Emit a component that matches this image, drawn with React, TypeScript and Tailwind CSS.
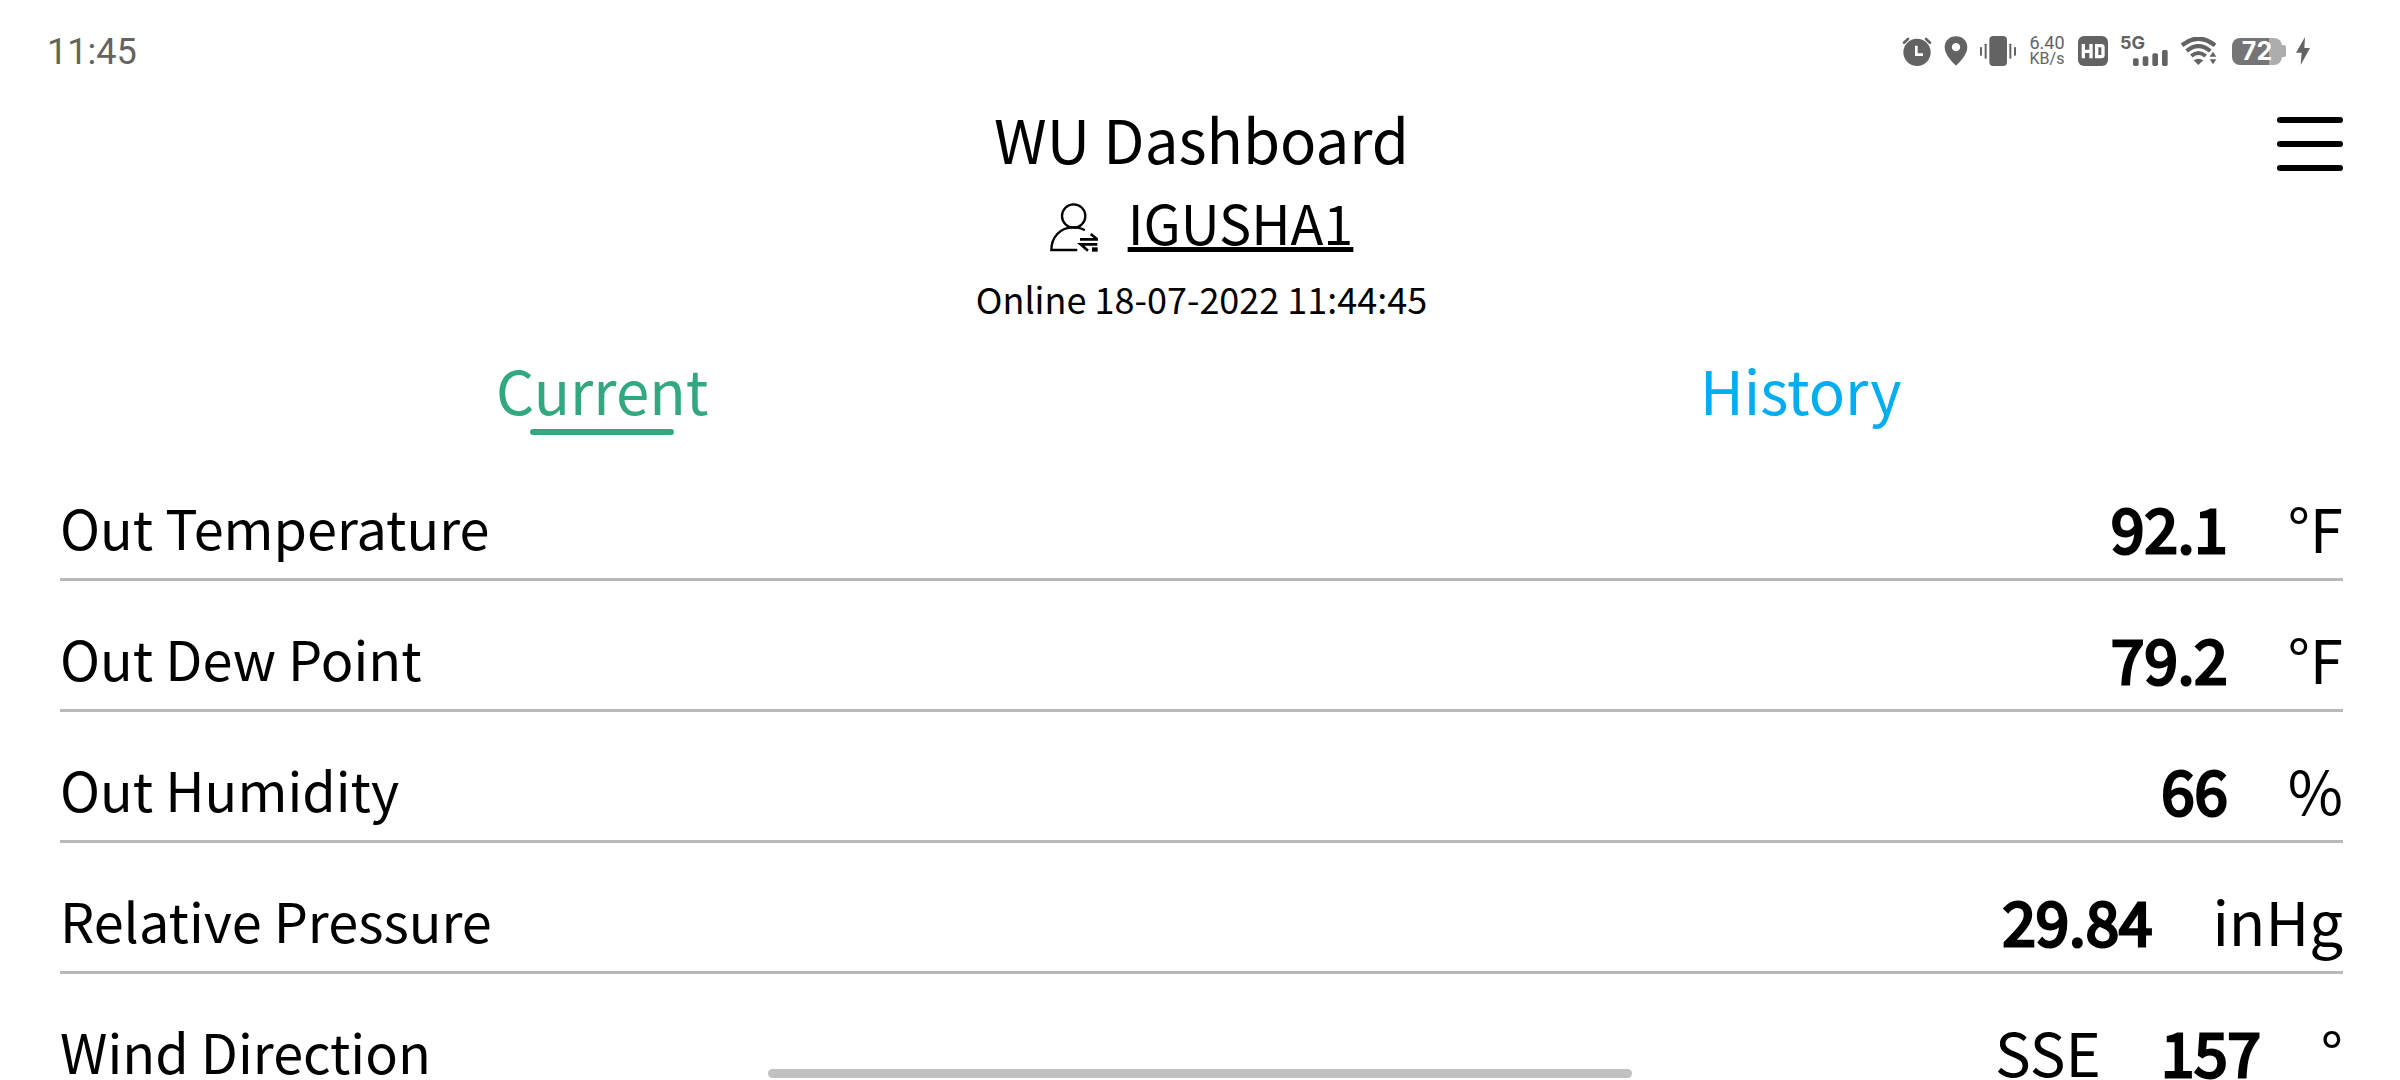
import React from "react";

type Reading = { label: string; prefix?: string; value: string; unit: string };

const readings: Reading[] = [
  { label: "Out Temperature", value: "92.1", unit: "°F" },
  { label: "Out Dew Point", value: "79.2", unit: "°F" },
  { label: "Out Humidity", value: "66", unit: "%" },
  { label: "Relative Pressure", value: "29.84", unit: "inHg" },
  { label: "Wind Direction", prefix: "SSE", value: "157", unit: "°" },
];

function AlarmIcon() {
  return (
    <svg viewBox="0 0 90 90" className="h-[30px] w-[30px]" fill="currentColor" aria-label="Alarm">
      <path fillRule="evenodd" d="M45 8a41 41 0 1 0 0 82a41 41 0 0 0 0-82zM39 29h8v23h16v8H39z" />
      <path d="M6 20L18 9M72 9L84 20" stroke="currentColor" strokeWidth="8" strokeLinecap="round" />
    </svg>
  );
}

function PinIcon() {
  return (
    <svg viewBox="0 0 72 90" className="h-[30px] w-6" fill="currentColor" aria-label="Location">
      <path fillRule="evenodd" d="M36 1C16 1 2 15 2 34c0 21 22 44 34 55c12-11 34-34 34-55C70 15 56 1 36 1zm0 20a12.500 12.500 0 1 1 0 25a12.500 12.500 0 0 1 0-25z" />
    </svg>
  );
}

function VibrateIcon() {
  return (
    <svg viewBox="0 0 108 90" className="h-[30px] w-9" fill="currentColor" aria-label="Vibrate">
      <rect x="28" y="0" width="53" height="90" rx="12" />
      <rect x="0" y="33" width="6" height="26" rx="2" />
      <rect x="14" y="23" width="6" height="45" rx="2" />
      <rect x="88" y="23" width="6" height="45" rx="2" />
      <rect x="102" y="33" width="6" height="26" rx="2" />
    </svg>
  );
}

function HdIcon() {
  return (
    <svg viewBox="0 0 90 90" className="h-[30px] w-[30px]" aria-label="HD">
      <rect width="90" height="90" rx="18" fill="currentColor" />
      <path d="M16 24v43M39 24v43M16 46h23M56 29h14q5 0 5 5v23q0 5-5 5H56z" fill="none" stroke="#fff" strokeWidth="10" />
    </svg>
  );
}

function SignalIcon() {
  return (
    <svg viewBox="0 0 105 48" className="h-4 w-[35px]" fill="currentColor" aria-label="Signal">
      <rect x="0" y="25" width="17" height="23" rx="5" />
      <rect x="29" y="19" width="17" height="29" rx="5" />
      <rect x="58" y="10" width="17" height="38" rx="5" />
      <rect x="87" y="0" width="17" height="48" rx="5" />
    </svg>
  );
}

function WifiIcon() {
  return (
    <svg viewBox="0 0 111 84" className="ml-px h-7 w-[37px]" fill="none" stroke="currentColor" aria-label="Wi-Fi">
      <path d="M3 25Q52-15 102 25" strokeWidth="13" />
      <path d="M17 42Q52 13 88 42" strokeWidth="12" />
      <path d="M31 57Q52 39 74 57" strokeWidth="12" />
      <path d="M38 70Q52 61 67 70L52 84z" fill="currentColor" stroke="none" />
      <path d="M96 44l10 15H86zM96 82l10-15H86z" fill="currentColor" stroke="none" />
    </svg>
  );
}

function Battery() {
  return (
    <span className="ml-0.5 flex items-center" aria-label="Battery 72 percent, charging">
      <span className="flex h-[27px] w-[50px] items-center justify-center rounded-lg bg-linear-to-r from-[#757575] from-73% to-[#adadad] to-73% font-[Inter] text-[25px] leading-none font-bold text-white">
        72
      </span>
      <span className="h-3 w-1 rounded-r-xs bg-[#adadad]" />
      <svg viewBox="0 0 42 84" className="ml-2.5 h-7 w-3.5" fill="currentColor" aria-hidden="true">
        <path d="M27 0L0 47h17l-3 37L42 33H25z" />
      </svg>
    </span>
  );
}

function StatusBar() {
  return (
    <div className="flex h-[102px] items-center justify-between pr-[90px] pl-[47px] text-[#636363]">
      <time className="pt-0.5 font-[Roboto] text-4xl leading-none">11:45</time>
      <div className="flex items-center gap-3">
        <AlarmIcon />
        <PinIcon />
        <VibrateIcon />
        <div className="flex w-[38px] flex-col items-center font-[Roboto]">
          <span className="text-lg leading-4">6.40</span>
          <span className="text-base leading-4">KB/s</span>
        </div>
        <HdIcon />
        <div className="flex h-[30px] w-12 flex-col">
          <span className="font-[Inter] text-lg leading-[14px] font-bold">5G</span>
          <div className="flex justify-end">
            <SignalIcon />
          </div>
        </div>
        <WifiIcon />
        <Battery />
      </div>
    </div>
  );
}

function SwitchUserIcon() {
  return (
    <svg viewBox="0 0 144 147" className="mt-2.5 h-[49px] w-12" fill="none" stroke="currentColor" strokeWidth="7" aria-hidden="true">
      <circle cx="71" cy="39" r="35" />
      <path d="M79 141H4C4 102 32 73 68 73c14 0 25 2 34 7" strokeLinecap="round" />
      <path d="M90 109h52L122 93M142 124H92l22 19" strokeWidth="8" />
      <path d="M126 133h17v13h-17z" fill="currentColor" stroke="none" />
    </svg>
  );
}

function ReadingRow({ label, prefix, value, unit }: Reading) {
  return (
    <div className="flex h-[131px] items-end justify-between border-b-3 border-[#b9b9b9] pb-[15px]">
      <dt className="text-[54px] leading-[72px]">{label}</dt>
      <dd className="flex gap-[60px] text-[60px] leading-[72px]">
        {prefix && <span>{prefix}</span>}
        <span className="[-webkit-text-stroke:3px_black]">{value}</span>
        <span>{unit}</span>
      </dd>
    </div>
  );
}

export default function App() {
  return (
    <div className="h-screen overflow-hidden bg-white font-['Noto_Sans_CJK_SC',sans-serif] text-black">
      <StatusBar />
      <header className="grid grid-cols-[1fr_auto_1fr] items-start pr-[57px] pl-[60px]">
        <div />
        <div className="flex flex-col items-center">
          <h1 className="text-[60px] leading-[72px]">WU Dashboard</h1>
          <a href="#station" className="flex items-center gap-[30px] text-[54px] leading-[96px]">
            <SwitchUserIcon />
            <span className="underline decoration-[5px] underline-offset-2">IGUSHA1</span>
          </a>
          <p className="text-4xl leading-[56px]">Online 18-07-2022 11:44:45</p>
        </div>
        <button type="button" aria-label="Menu" className="mt-[15px] flex w-[66px] flex-col gap-[18px] justify-self-end">
          <span className="h-1.5 rounded-full bg-black" />
          <span className="h-1.5 rounded-full bg-black" />
          <span className="h-1.5 rounded-full bg-black" />
        </button>
      </header>
      <nav className="grid h-[124px] grid-cols-2 items-start pt-[25px] pl-[3px] text-[60px] leading-[75px]">
        <button type="button" className="flex flex-col items-center gap-[3px] text-[#33a880]">
          Current
          <span className="h-1.5 w-36 rounded-full bg-[#33a880]" />
        </button>
        <button type="button" className="flex flex-col items-center text-[#00adef]">History</button>
      </nav>
      <dl className="pr-[57px] pl-[60px]">
        {readings.map((r) => (
          <ReadingRow key={r.label} {...r} />
        ))}
      </dl>
      <div className="fixed bottom-0.5 left-1/2 h-[9px] w-[36%] -translate-x-1/2 rounded-full bg-[#c1c1c1]" />
    </div>
  );
}
